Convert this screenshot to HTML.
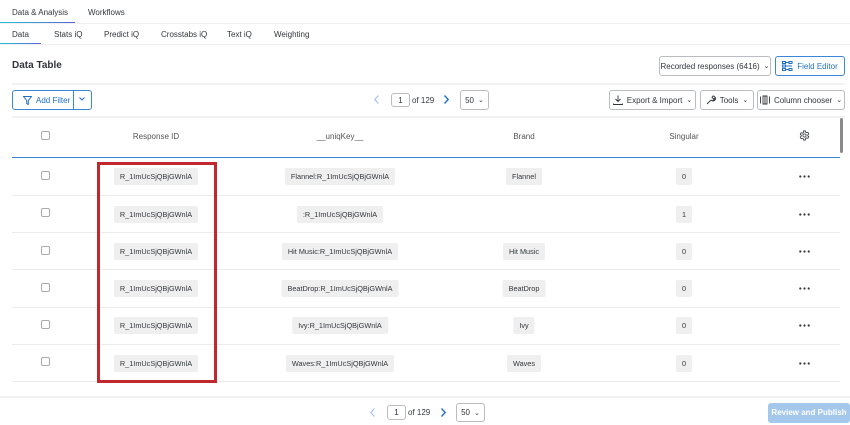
<!DOCTYPE html>
<html><head><style>
*{box-sizing:border-box;margin:0;padding:0}
body{width:850px;height:425px;overflow:hidden;background:#fff;font-family:"Liberation Sans",sans-serif;color:#32363a;position:relative;font-size:8px}
.a{position:absolute}
.t{position:absolute;white-space:nowrap}
.hr{position:absolute;height:1px;background:#ececec}
.btn{position:absolute;border:1px solid #b9bdc2;border-radius:3px;height:20px;background:#fff;font-size:8px;display:flex;align-items:center;justify-content:center;gap:4px;color:#32363a}
.chip{position:absolute;background:#efefef;border-radius:2px;height:17px;line-height:17px;font-size:7.3px;padding:0 6px;transform:translateX(-50%);white-space:nowrap}
.cb{position:absolute;width:9px;height:9px;border:1px solid #a8acb0;border-radius:2px;left:41px}
.dots{position:absolute;left:799px;width:11px;height:3px}
.th{position:absolute;top:132px;font-size:8px;color:#555;transform:translateX(-50%)}
.ar{position:absolute}
</style></head><body>
<div class="t" style="left:12px;top:8px;font-size:8px">Data &amp; Analysis</div>
<div class="t" style="left:88px;top:8px;font-size:8px">Workflows</div>
<div class="a" style="left:0;top:22px;width:75px;height:2px;background:linear-gradient(90deg,#21c4d8,#5a62d8)"></div>
<div class="hr" style="left:0;top:23px;width:850px;background:#f0f0f0"></div>
<div class="t" style="left:12px;top:30px">Data</div>
<div class="t" style="left:54px;top:30px">Stats iQ</div>
<div class="t" style="left:104px;top:30px">Predict iQ</div>
<div class="t" style="left:161px;top:30px">Crosstabs iQ</div>
<div class="t" style="left:227px;top:30px">Text iQ</div>
<div class="t" style="left:274px;top:30px">Weighting</div>
<div class="a" style="left:0;top:43px;width:41px;height:2px;background:linear-gradient(90deg,#21c4d8,#5a62d8)"></div>
<div class="hr" style="left:0;top:44px;width:850px;background:#f0f0f0"></div>
<div class="t" style="left:12px;top:60px;font-size:10px;font-weight:bold">Data Table</div>
<div class="btn" style="left:659px;top:56px;width:112px;">Recorded responses (6416) <span style="font-size:7px">&#8964;</span></div>
<div class="btn" style="left:775px;top:56px;width:70px;border-color:#3a86d8;color:#1f6fc9">
<svg width="11" height="10" viewBox="0 0 11 10"><g fill="none" stroke="#1f6fc9" stroke-width="1"><rect x="0.5" y="0.5" width="3" height="2"/><rect x="0.5" y="4" width="3" height="2"/><rect x="0.5" y="7.5" width="3" height="2"/><rect x="7" y="0.5" width="3" height="2"/><rect x="7" y="7.5" width="3" height="2"/><path d="M4 1.5h3M4 8.5h3M4 5h6"/></g></svg>Field Editor</div>
<div class="hr" style="left:12px;top:83px;width:833px;height:2px;background:#f2f2f2"></div>
<div class="btn" style="left:12px;top:90px;width:80px;border-color:#3a86d8;color:#1f6fc9;justify-content:flex-start;padding-left:10px">
<svg width="9" height="9" viewBox="0 0 9 9"><path d="M0.5 0.5h8L5.3 4.5v4L3.7 7.5v-3z" fill="none" stroke="#1f6fc9"/></svg>Add Filter</div>
<div class="a" style="left:73px;top:91px;width:1px;height:18px;background:#3a86d8"></div>
<svg class="ar" style="left:79px;top:97px" width="6" height="4" viewBox="0 0 6 4"><path d="M0.5 0.5L3 3 5.5 0.5" fill="none" stroke="#1f6fc9"/></svg>
<svg class="ar" style="left:374px;top:95px" width="5" height="9" viewBox="0 0 5 9"><path d="M4.5 0.5L0.8 4.5 4.5 8.5" fill="none" stroke="#9cc4ee" stroke-width="1.2"/></svg>
<div class="btn" style="left:391px;top:93px;width:19px;height:14px">1</div>
<div class="t" style="left:412px;top:96px">of 129</div>
<svg class="ar" style="left:444px;top:95px" width="5" height="9" viewBox="0 0 5 9"><path d="M0.5 0.5L4.2 4.5 0.5 8.5" fill="none" stroke="#1f6fc9" stroke-width="1.4"/></svg>
<div class="btn" style="left:460px;top:90px;width:29px">50 <span style="font-size:7px">&#8964;</span></div>
<div class="btn" style="left:609px;top:90px;width:87px">
<svg width="10" height="10" viewBox="0 0 10 10"><path d="M5 0.5v6M2.5 4l2.5 2.5L7.5 4M0.5 8.5v1h9v-1" fill="none" stroke="#32363a" stroke-width="0.9"/></svg>Export &amp; Import <span style="font-size:7px">&#8964;</span></div>
<div class="btn" style="left:700px;top:90px;width:54px">
<svg width="10" height="10" viewBox="0 0 10 10"><path d="M1 9l4-4M5 5a2.5 2.5 0 1 0 2-4l-1 1.5 1.5 1.5 1.5-1A2.5 2.5 0 0 1 5 5" fill="none" stroke="#32363a" stroke-width="0.9"/></svg>Tools <span style="font-size:7px">&#8964;</span></div>
<div class="btn" style="left:757px;top:90px;width:88px">
<svg width="10" height="10" viewBox="0 0 10 10"><path d="M0.5 1.5v7M3 1h4v8H3zM9.5 1.5v7M5 1v8" fill="none" stroke="#32363a" stroke-width="0.9"/></svg>Column chooser <span style="font-size:7px">&#8964;</span></div>
<div class="hr" style="left:12px;top:116px;width:833px;height:2px;background:#f2f2f2"></div>
<div class="cb" style="top:131px"></div>
<div class="th" style="left:156px">Response ID</div>
<div class="th" style="left:340px">__uniqKey__</div>
<div class="th" style="left:524px">Brand</div>
<div class="th" style="left:684px">Singular</div>
<svg class="ar" style="left:799px;top:130px" width="11" height="11" viewBox="0 0 24 24"><path d="M12 8.5a3.5 3.5 0 1 0 0 7 3.5 3.5 0 0 0 0-7zM10 2h4l.6 2.8 2 1.1 2.7-.9 2 3.5-2.1 1.9v2.2l2.1 1.9-2 3.5-2.7-.9-2 1.1L14 22h-4l-.6-2.8-2-1.1-2.7.9-2-3.5 2.1-1.9V11.4L2.7 9.5l2-3.5 2.7.9 2-1.1z" fill="none" stroke="#32363a" stroke-width="1.8"/></svg>
<div class="a" style="left:840px;top:118px;width:3px;height:35px;background:#8a8a8a;border-radius:2px"></div>
<div class="a" style="left:12px;top:157px;width:828px;height:1px;background:#3a86d8"></div>
<svg width="0" height="0" style="position:absolute"><defs><g id="d"><circle cx="1.3" cy="1.5" r="1.1" fill="#32363a"/><circle cx="5.5" cy="1.5" r="1.1" fill="#32363a"/><circle cx="9.7" cy="1.5" r="1.1" fill="#32363a"/></g></defs></svg>
<div class="cb" style="top:171px"></div><div class="chip" style="left:156px;top:168px">R_1ImUcSjQBjGWnlA</div><div class="chip" style="left:340px;top:168px">Flannel:R_1ImUcSjQBjGWnlA</div><div class="chip" style="left:524px;top:168px">Flannel</div><div class="chip" style="left:684px;top:168px">0</div><svg class="dots" style="top:175px"><use href="#d"/></svg><div class="hr" style="left:12px;top:195px;width:828px"></div>
<div class="cb" style="top:208px"></div><div class="chip" style="left:156px;top:206px">R_1ImUcSjQBjGWnlA</div><div class="chip" style="left:340px;top:206px">:R_1ImUcSjQBjGWnlA</div><div class="chip" style="left:684px;top:206px">1</div><svg class="dots" style="top:213px"><use href="#d"/></svg><div class="hr" style="left:12px;top:232px;width:828px"></div>
<div class="cb" style="top:246px"></div><div class="chip" style="left:156px;top:243px">R_1ImUcSjQBjGWnlA</div><div class="chip" style="left:340px;top:243px">Hit Music:R_1ImUcSjQBjGWnlA</div><div class="chip" style="left:524px;top:243px">Hit Music</div><div class="chip" style="left:684px;top:243px">0</div><svg class="dots" style="top:250px"><use href="#d"/></svg><div class="hr" style="left:12px;top:269px;width:828px"></div>
<div class="cb" style="top:283px"></div><div class="chip" style="left:156px;top:280px">R_1ImUcSjQBjGWnlA</div><div class="chip" style="left:340px;top:280px">BeatDrop:R_1ImUcSjQBjGWnlA</div><div class="chip" style="left:524px;top:280px">BeatDrop</div><div class="chip" style="left:684px;top:280px">0</div><svg class="dots" style="top:287px"><use href="#d"/></svg><div class="hr" style="left:12px;top:307px;width:828px"></div>
<div class="cb" style="top:320px"></div><div class="chip" style="left:156px;top:317px">R_1ImUcSjQBjGWnlA</div><div class="chip" style="left:340px;top:317px">Ivy:R_1ImUcSjQBjGWnlA</div><div class="chip" style="left:524px;top:317px">Ivy</div><div class="chip" style="left:684px;top:317px">0</div><svg class="dots" style="top:324px"><use href="#d"/></svg><div class="hr" style="left:12px;top:344px;width:828px"></div>
<div class="cb" style="top:357px"></div><div class="chip" style="left:156px;top:355px">R_1ImUcSjQBjGWnlA</div><div class="chip" style="left:340px;top:355px">Waves:R_1ImUcSjQBjGWnlA</div><div class="chip" style="left:524px;top:355px">Waves</div><div class="chip" style="left:684px;top:355px">0</div><svg class="dots" style="top:362px"><use href="#d"/></svg><div class="hr" style="left:12px;top:381px;width:828px"></div>
<div class="a" style="left:97px;top:162px;width:120px;height:221px;border:3px solid #c1272d"></div>
<div class="hr" style="left:0;top:396px;width:850px;height:2px;background:#f2f2f2"></div>
<svg class="ar" style="left:370px;top:408px" width="5" height="9" viewBox="0 0 5 9"><path d="M4.5 0.5L0.8 4.5 4.5 8.5" fill="none" stroke="#9cc4ee" stroke-width="1.2"/></svg>
<div class="btn" style="left:387px;top:405px;width:19px;height:15px">1</div>
<div class="t" style="left:408px;top:408px">of 129</div>
<svg class="ar" style="left:441px;top:408px" width="5" height="9" viewBox="0 0 5 9"><path d="M0.5 0.5L4.2 4.5 0.5 8.5" fill="none" stroke="#1f6fc9" stroke-width="1.4"/></svg>
<div class="btn" style="left:456px;top:403px;width:29px;height:19px">50 <span style="font-size:7px">&#8964;</span></div>
<div class="a" style="left:768px;top:403px;width:82px;height:20px;background:#a4c8ec;border-radius:3px;color:#fff;font-size:8px;font-weight:bold;line-height:20px;text-align:center">Review and Publish</div>
</body></html>
